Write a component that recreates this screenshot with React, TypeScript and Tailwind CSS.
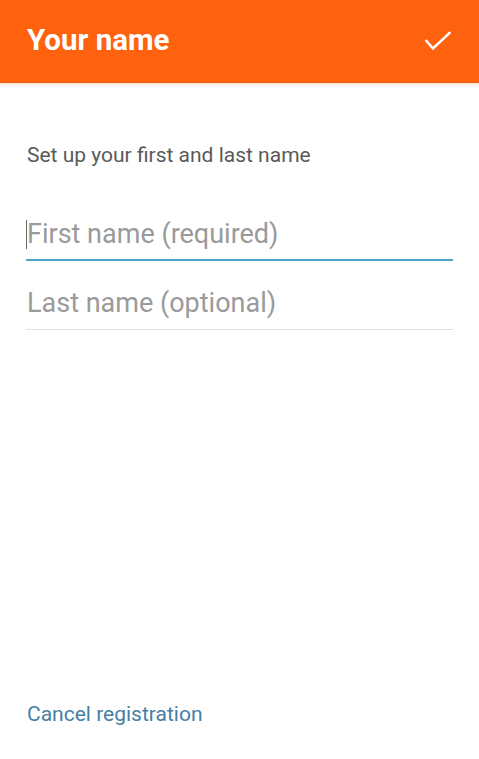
import React from "react";

export default function App() {
  return (
    <div className="w-[479px] h-[759px] bg-white flex flex-col" style={{ fontFamily: "Roboto, 'Noto Sans', sans-serif" }}>
      <div className="h-[83px] bg-[#ff620f] border-b border-[#e2601c] shadow-[0_2px_2px_rgba(255,140,60,0.25)] flex items-center justify-between pl-[27px] pr-[28px] shrink-0">
        <span className="text-white font-bold text-[29.5px] leading-none mt-[-1px]">Your name</span>
        <svg width="26" height="22" viewBox="0 0 26 22" fill="none" className="mt-[2px]">
          <path d="M1.5 10 L8 17.5 L24.5 2" stroke="white" strokeWidth="2.6" strokeLinecap="square" />
        </svg>
      </div>
      <div className="flex flex-col flex-1 px-[26px]">
        <div className="mt-[59px] text-[21px] leading-[26px] text-[#5a5a5a] pl-[1px]">Set up your first and last name</div>
        <div className="mt-[53px] relative pb-[11px] border-b-2 border-[#4ea5c6]">
          <div className="absolute left-0 top-[-1px] w-[1px] h-[29px] bg-[#6a6a6a]" />
          <div className="text-[27px] leading-[27px] text-[#9a9a9a] pl-[1px]">First name (required)</div>
        </div>
        <div className="mt-[29px] pb-[12px] border-b border-[#e0e0e0]">
          <div className="text-[27px] leading-[27px] text-[#9a9a9a] pl-[1px]">Last name (optional)</div>
        </div>
        <div className="flex-1" />
        <div className="text-[21px] leading-[21px] text-[#4680a4] pl-[1px] mb-[34px]">Cancel registration</div>
      </div>
    </div>
  );
}
